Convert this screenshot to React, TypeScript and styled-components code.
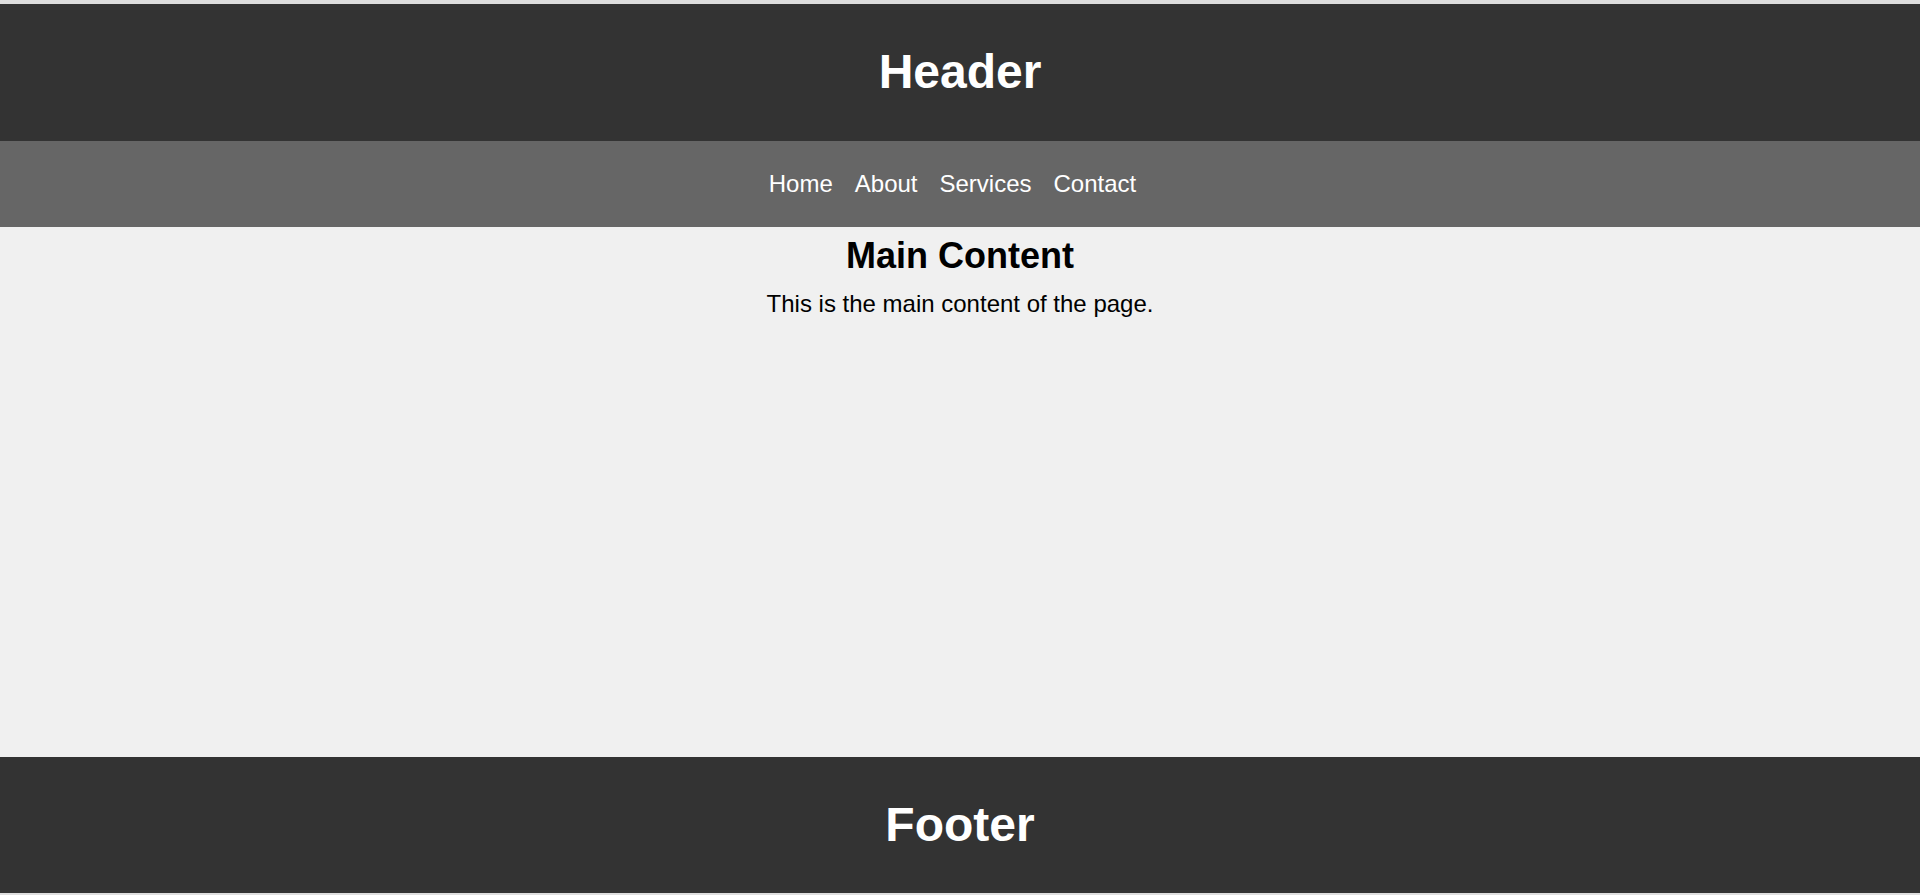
import styled, { createGlobalStyle } from "styled-components";

const GlobalStyle = createGlobalStyle`
  html, body {
    margin: 0;
    padding: 0;
    background: #dedede;
    font-family: "Liberation Sans", Arial, sans-serif;
  }
`;

const Page = styled.div`
  display: flex;
  flex-direction: column;
  height: 100vh;
  padding: 4px 0 2px;
  box-sizing: border-box;
`;

const Bar = styled.header`
  background: #333333;
  color: #ffffff;
  text-align: center;
  padding: 40px 0 ${(p: { $bottom: number }) => p.$bottom}px;
`;

const BarTitle = styled.h1`
  margin: 0;
  font-size: 48px;
  font-weight: bold;
  line-height: 55px;
`;

const Nav = styled.nav`
  background: #666666;
  padding: 29px 15px 29px 0;
`;

const NavList = styled.ul`
  display: flex;
  justify-content: center;
  gap: 22px;
  margin: 0;
  padding: 0;
  list-style: none;
`;

const NavLink = styled.a`
  color: #ffffff;
  text-decoration: none;
  font-size: 24px;
  line-height: 28px;
  display: block;
`;

const Main = styled.main`
  flex: 1;
  background: #f0f0f0;
  text-align: center;
  padding-top: 8px;
`;

const MainTitle = styled.h2`
  margin: 0 0 14px;
  font-size: 36px;
  font-weight: bold;
  line-height: 41px;
  color: #000000;
`;

const MainText = styled.p`
  margin: 0;
  font-size: 24px;
  line-height: 28px;
  color: #000000;
`;

const links = ["Home", "About", "Services", "Contact"];

export default function App() {
  return (
    <>
      <GlobalStyle />
      <Page>
        <Bar $bottom={42}>
          <BarTitle>Header</BarTitle>
        </Bar>
        <Nav>
          <NavList>
            {links.map((l) => (
              <li key={l}>
                <NavLink href="#">{l}</NavLink>
              </li>
            ))}
          </NavList>
        </Nav>
        <Main>
          <MainTitle>Main Content</MainTitle>
          <MainText>This is the main content of the page.</MainText>
        </Main>
        <Bar as="footer" $bottom={41}>
          <BarTitle>Footer</BarTitle>
        </Bar>
      </Page>
    </>
  );
}
